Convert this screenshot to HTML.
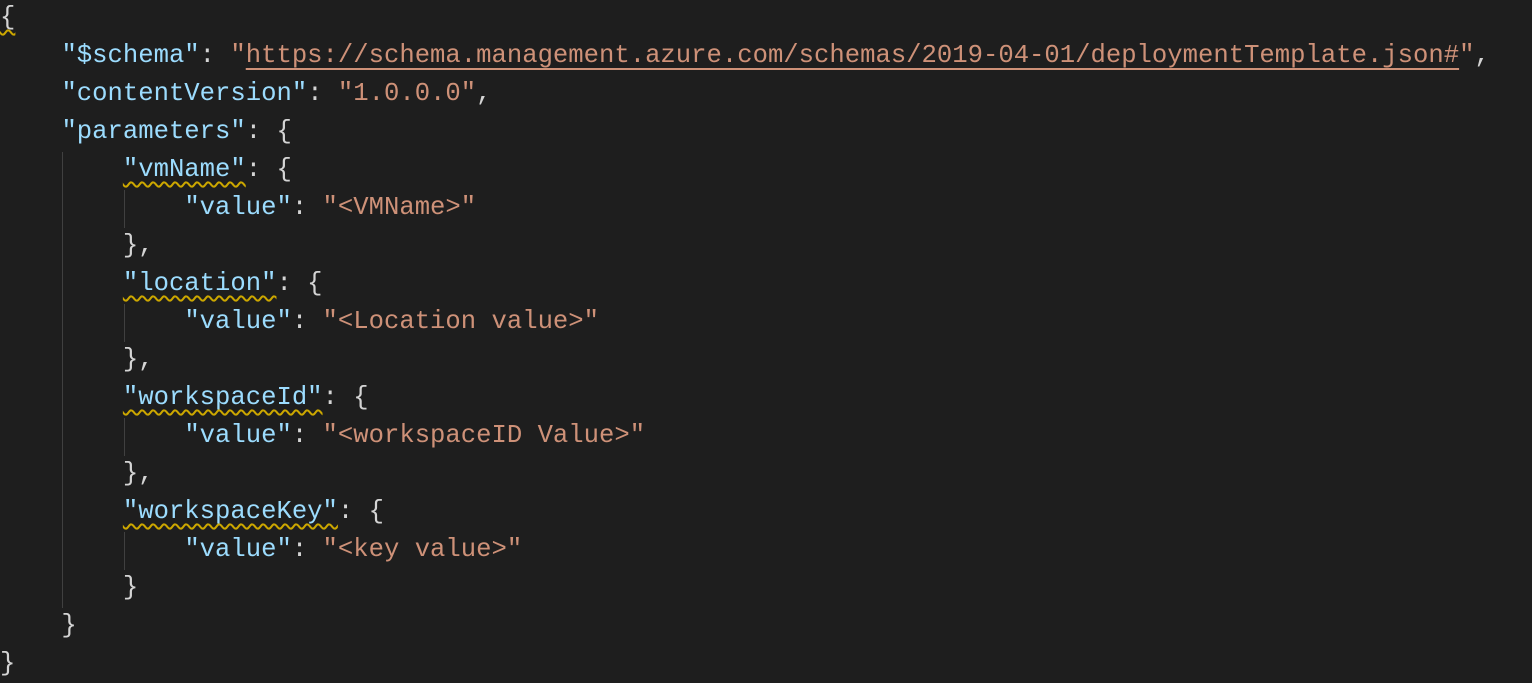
<!DOCTYPE html>
<html><head><meta charset="utf-8"><style>
html,body{margin:0;padding:0;background:#1e1e1e;width:1532px;height:681px;overflow:hidden}
pre{margin:0;position:absolute;left:0;top:-1px;font-family:"Liberation Mono",monospace;font-size:25.6px;line-height:38px;color:#d4d4d4;white-space:pre}
.k{color:#9cdcfe}.s{color:#ce9178}
.w{text-decoration:underline wavy #cca700;text-decoration-thickness:1.5px;text-underline-offset:5px}
.u{text-decoration:underline #ce9178;text-decoration-thickness:1.5px;text-underline-offset:6px}
.g{position:absolute;width:1px;background:#404040}
</style></head><body>
<div class="g" style="left:62px;top:152px;height:456px"></div>
<div class="g" style="left:124px;top:190px;height:38px"></div>
<div class="g" style="left:124px;top:304px;height:38px"></div>
<div class="g" style="left:124px;top:418px;height:38px"></div>
<div class="g" style="left:124px;top:532px;height:38px"></div>
<pre><span class="w">{</span>
    <span class="k">"$schema"</span>: <span class="s">"<span class="u">https://schema.management.azure.com/schemas/2019-04-01/deploymentTemplate.json#</span>"</span>,
    <span class="k">"contentVersion"</span>: <span class="s">"1.0.0.0"</span>,
    <span class="k">"parameters"</span>: {
        <span class="k w">"vmName"</span>: {
            <span class="k">"value"</span>: <span class="s">"&lt;VMName&gt;"</span>
        },
        <span class="k w">"location"</span>: {
            <span class="k">"value"</span>: <span class="s">"&lt;Location value&gt;"</span>
        },
        <span class="k w">"workspaceId"</span>: {
            <span class="k">"value"</span>: <span class="s">"&lt;workspaceID Value&gt;"</span>
        },
        <span class="k w">"workspaceKey"</span>: {
            <span class="k">"value"</span>: <span class="s">"&lt;key value&gt;"</span>
        }
    }
}</pre>
</body></html>
